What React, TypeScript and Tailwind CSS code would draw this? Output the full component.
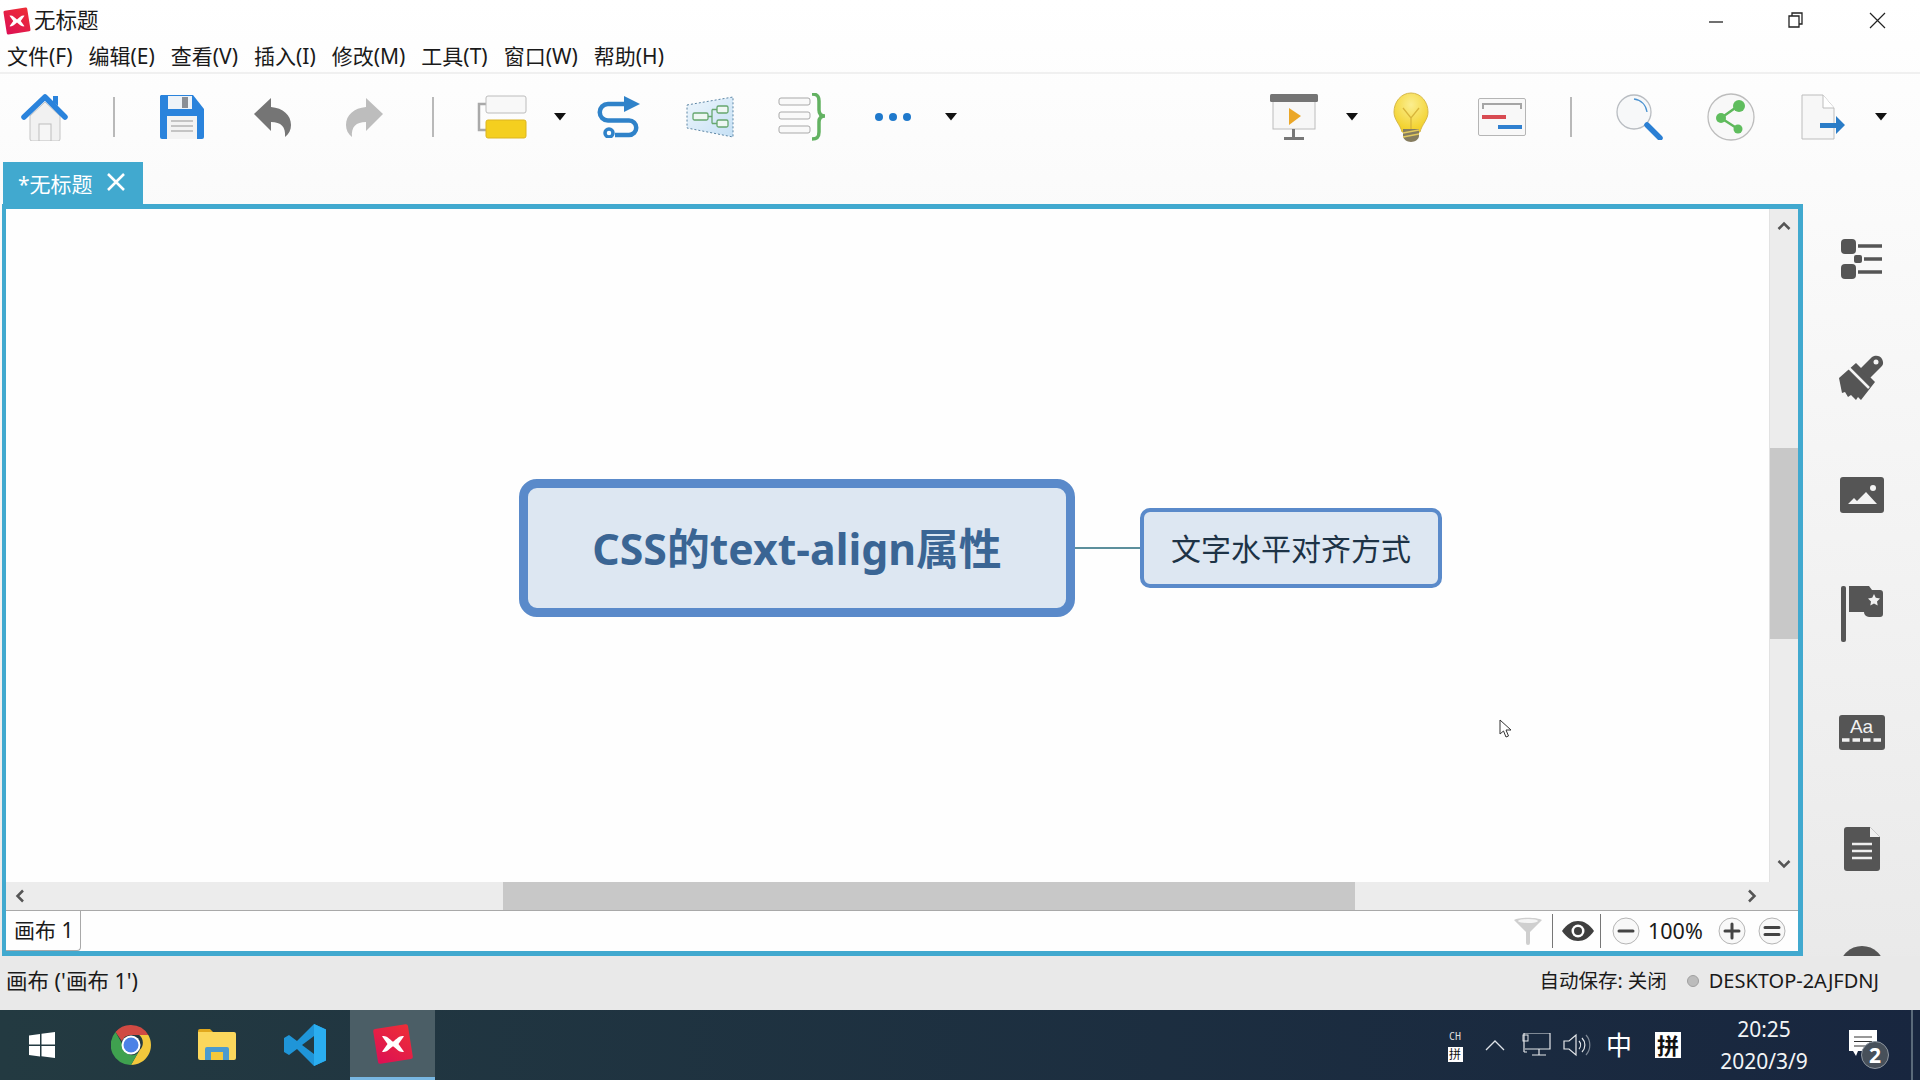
import type { ReactNode } from 'react';

const menus = ['文件(F)', '编辑(E)', '查看(V)', '插入(I)', '修改(M)', '工具(T)', '窗口(W)', '帮助(H)'];

function Caret({ className }: { className: string }) {
  return (
    <svg width="12" height="8" viewBox="0 0 12 8" className={className}>
      <path d="M0 0h12L6 7.5z" fill="#111" />
    </svg>
  );
}

function Sep({ className }: { className: string }) {
  return <div className={`w-[2px] h-[40px] bg-[#b9b9b9] ${className}`} />;
}

function XmindLogo({ size, className }: { size: number; className?: string }) {
  return (
    <svg width={size} height={size} viewBox="0 0 40 40" className={className}>
      <defs>
        <linearGradient id="xm" x1="1" y1="0" x2="0" y2="1">
          <stop offset="0" stopColor="#ee2f36" />
          <stop offset="1" stopColor="#dc0f55" />
        </linearGradient>
      </defs>
      <rect x="4" y="4" width="32" height="32" rx="2" fill="url(#xm)" transform="rotate(-9 20 20)" />
      <path d="M10 13c4-1 6 2 10 5 4-3 6-6 10-5l-5 7 5 7c-4 1-6-2-10-5-4 3-6 6-10 5l5-7z" fill="#fff" />
    </svg>
  );
}

function HomeIcon({ className }: { className: string }) {
  return (
    <svg width="48" height="48" viewBox="0 0 48 48" className={className}>
      <path d="M9 23 24 9l15 14v23a2 2 0 0 1-2 2H11a2 2 0 0 1-2-2z" fill="#f1f1f1" stroke="#c4c4c4" />
      <rect x="18" y="31" width="12" height="17" fill="#f6f6f6" stroke="#bdbdbd" />
      <path d="M3 24 24 4l20 20" fill="none" stroke="#2a83dc" strokeWidth="5.5" strokeLinecap="round" strokeLinejoin="round" />
      <path d="M32 3h5v10l-5-4z" fill="#2a83dc" />
    </svg>
  );
}

function SaveIcon({ className }: { className: string }) {
  return (
    <svg width="44" height="44" viewBox="0 0 44 44" className={className}>
      <path d="M1 0h32l11 14v28a2 2 0 0 1-2 2H2a2 2 0 0 1-2-2V1z" fill="#2a83dc" />
      <rect x="8" y="1" width="24" height="13" fill="#eef3f8" />
      <rect x="22" y="2" width="6" height="11" fill="#8a8f96" />
      <rect x="7" y="21" width="30" height="23" fill="#f3f3f3" />
      <path d="M11 26h22M11 31h22M11 36h22" stroke="#b5b5b5" strokeWidth="1.5" />
    </svg>
  );
}

function UndoIcon({ className, color, flip }: { className: string; color: string; flip?: boolean }) {
  return (
    <svg width="38" height="40" viewBox="0 0 38 40" className={className}>
      <g transform={flip ? 'matrix(-1 0 0 1 38 0)' : undefined}>
        <path d="M0 17 17 1v9c12 1 20 8 20 18 0 5-2 9-6 12 1-10-4-15-14-15v9z" fill={color} />
      </g>
    </svg>
  );
}

function TopicIcon({ className }: { className: string }) {
  return (
    <svg width="54" height="44" viewBox="0 0 54 44" className={className}>
      <path d="M11 9H3v26h8" fill="none" stroke="#a9a9a9" strokeWidth="2.5" />
      <rect x="10" y="1" width="40" height="17" rx="2" fill="#f8f8f8" stroke="#bcbcbc" />
      <rect x="10" y="25" width="40" height="18" rx="2" fill="#f4cf1f" stroke="#dcb520" />
    </svg>
  );
}

function RelationIcon({ className }: { className: string }) {
  return (
    <svg width="46" height="42" viewBox="0 0 46 42" className={className}>
      <path d="M30 8H13a8 8 0 0 0 0 16.500h21a7 7 0 0 1 0 14.500H20" fill="none" stroke="#2f82c9" strokeWidth="4.5" />
      <circle cx="14" cy="37" r="4" fill="#fff" stroke="#2f82c9" strokeWidth="3.500" />
      <path d="M29 0 45 8l-16 8z" fill="#2f82c9" />
    </svg>
  );
}

function BoundaryIcon({ className }: { className: string }) {
  return (
    <svg width="49" height="42" viewBox="0 0 49 42" className={className}>
      <defs>
        <linearGradient id="bd" x1="0" y1="0" x2="1" y2="1">
          <stop offset="0" stopColor="#eef6fc" />
          <stop offset="1" stopColor="#c5e0f5" />
        </linearGradient>
      </defs>
      <path d="M1 9 47 1v40L1 32z" fill="url(#bd)" stroke="#5d86a5" strokeDasharray="2 2" />
      <rect x="7" y="17" width="15" height="7" rx="1.500" fill="#eef7f3" stroke="#66a76e" strokeWidth="1.300" />
      <rect x="31" y="10" width="11" height="7" rx="1.500" fill="#eef7f3" stroke="#66a76e" strokeWidth="1.300" />
      <rect x="31" y="24" width="11" height="7" rx="1.500" fill="#eef7f3" stroke="#66a76e" strokeWidth="1.300" />
      <path d="M22 20.500h4M26 13.500v14M26 13.500h5M26 27.500h5" fill="none" stroke="#66a76e" strokeWidth="1.300" />
    </svg>
  );
}

function SummaryIcon({ className }: { className: string }) {
  return (
    <svg width="48" height="48" viewBox="0 0 48 48" className={className}>
      <rect x="1" y="5" width="31" height="7" rx="2" fill="#f9f9f9" stroke="#a9a9a9" />
      <rect x="1" y="19" width="31" height="7" rx="2" fill="#f9f9f9" stroke="#a9a9a9" />
      <rect x="1" y="33" width="31" height="7" rx="2" fill="#f9f9f9" stroke="#a9a9a9" />
      <path d="M34 1c5 0 7 2 7 7v9c0 4 2 6 6 6-4 0-6 2-6 6v10c0 5-2 7-7 7" fill="none" stroke="#63b262" strokeWidth="3.500" />
    </svg>
  );
}

function DotsIcon({ className }: { className: string }) {
  return (
    <svg width="38" height="10" viewBox="0 0 38 10" className={className}>
      <circle cx="5" cy="5" r="4" fill="#1f79cc" />
      <circle cx="19" cy="5" r="4" fill="#1f79cc" />
      <circle cx="33" cy="5" r="4" fill="#1f79cc" />
    </svg>
  );
}

function PresentIcon({ className }: { className: string }) {
  return (
    <svg width="48" height="46" viewBox="0 0 48 46" className={className}>
      <rect x="3" y="3" width="42" height="32" fill="#f7f7f7" stroke="#bcbcbc" />
      <rect x="0" y="0" width="48" height="8" rx="1.500" fill="#747474" />
      <path d="M19 14 31 22 19 31z" fill="#eba728" />
      <rect x="22" y="35" width="3" height="9" fill="#777" />
      <rect x="14" y="43" width="20" height="3" fill="#777" />
    </svg>
  );
}

function BulbIcon({ className }: { className: string }) {
  return (
    <svg width="36" height="50" viewBox="0 0 36 50" className={className}>
      <defs>
        <radialGradient id="bb" cx="0.5" cy="0.3" r="0.7">
          <stop offset="0" stopColor="#fbee8f" />
          <stop offset="1" stopColor="#f2cf24" />
        </radialGradient>
      </defs>
      <path d="M18 1C8 1 1 10 1 20c0 8 6 12 8 20h18c2-8 8-12 8-20C35 10 28 1 18 1z" fill="url(#bb)" stroke="#d6b84a" />
      <path d="M10 16l8 10 8-10M18 26v13" fill="none" stroke="#d8b53b" strokeWidth="1.300" />
      <path d="M10 37h16v7c0 3-4 6-8 6s-8-3-8-6z" fill="#857c5e" />
      <path d="M10 41l16-3M10 45l16-3" stroke="#e2c95f" strokeWidth="1.500" />
    </svg>
  );
}

function GanttIcon({ className }: { className: string }) {
  return (
    <svg width="48" height="38" viewBox="0 0 48 38" className={className}>
      <rect x="0.500" y="0.500" width="47" height="37" rx="1.500" fill="#f8f8f8" stroke="#b5b5b5" />
      <path d="M5 11V6h38v5" fill="none" stroke="#a5a5a5" strokeWidth="2" />
      <rect x="4" y="17" width="24" height="4" fill="#d84b52" />
      <rect x="20" y="27" width="24" height="4" fill="#2f80d0" />
    </svg>
  );
}

function SearchIcon({ className }: { className: string }) {
  return (
    <svg width="47" height="46" viewBox="0 0 47 46" className={className}>
      <circle cx="18" cy="18" r="17" fill="#f7f8f9" stroke="#b9bdc2" strokeWidth="1.300" />
      <path d="M18 5c7 1 12 6 13 13" fill="none" stroke="#4b92d0" strokeWidth="1.300" />
      <path d="M31 31l13 13" stroke="#2a7fd4" strokeWidth="5.500" strokeLinecap="round" />
    </svg>
  );
}

function ShareIcon({ className }: { className: string }) {
  return (
    <svg width="48" height="48" viewBox="0 0 48 48" className={className}>
      <circle cx="24" cy="24" r="23" fill="#f8f8f8" stroke="#bdbdbd" strokeWidth="1.300" />
      <path d="M14 25 31 13M14 25l17 11" stroke="#5fb85c" strokeWidth="2.500" />
      <circle cx="32" cy="13" r="6" fill="#5fbd5d" />
      <circle cx="14" cy="25" r="5" fill="#5fbd5d" />
      <circle cx="31" cy="36" r="4.500" fill="#5fbd5d" />
    </svg>
  );
}

function ExportIcon({ className }: { className: string }) {
  return (
    <svg width="45" height="46" viewBox="0 0 45 46" className={className}>
      <path d="M1 1h21l11 13v31H1z" fill="#f7f7f7" stroke="#bdbdbd" />
      <path d="M22 1v13h11" fill="#fff" stroke="#bdbdbd" />
      <path d="M19 29h16v-7l9 9-9 9v-6H19z" fill="#2a7cc7" />
    </svg>
  );
}

function PanelSlot({ children }: { children: ReactNode }) {
  return <div className="h-[60px] w-full shrink-0 flex items-center justify-center">{children}</div>;
}

function SideIcons() {
  const c = '#555555';
  return (
    <div className="flex-1 h-[752px] overflow-hidden pt-[26px] flex flex-col gap-[58px]">
      <PanelSlot>
        <svg width="42" height="42" viewBox="0 0 42 42">
          <rect x="0" y="0" width="15" height="15" rx="4" fill={c} />
          <rect x="0" y="25" width="15" height="15" rx="4" fill={c} />
          <rect x="13" y="16" width="8" height="8" rx="2" fill={c} />
          <path d="M17 7h24M23 20h18M17 33h24" stroke={c} strokeWidth="3.500" />
        </svg>
      </PanelSlot>
      <PanelSlot>
        <svg width="46" height="46" viewBox="0 0 46 46">
          <path d="M0 23 17 8l19 19-14 18-3-3-2 3-5-5-3 2-3-5-3 1z" fill={c} />
          <path d="M10 13 30 33" stroke="#f5f5f5" strokeWidth="2.500" />
          <path d="M21 14 33 2c3-2 8-2 10 2s1 6-1 8L30 24z" fill={c} />
          <circle cx="37" cy="7" r="2.500" fill="#f5f5f5" />
        </svg>
      </PanelSlot>
      <PanelSlot>
        <svg width="44" height="36" viewBox="0 0 44 36" className="-mt-[2px]">
          <rect x="0" y="0" width="44" height="36" rx="3" fill={c} />
          <circle cx="33" cy="11" r="3" fill="#f3f3f3" />
          <path d="M8 27l6-6 3 3 9-9 11 12z" fill="#f3f3f3" />
        </svg>
      </PanelSlot>
      <PanelSlot>
        <svg width="42" height="56" viewBox="0 0 42 56">
          <rect x="0" y="0" width="5" height="56" rx="2" fill={c} />
          <path d="M8 0h20l3 4h8a3 3 0 0 1 3 3v21a3 3 0 0 1-3 3H28a5 5 0 0 1-5-5H8z" fill={c} />
          <path d="m33 8 1.800 3.800 4.200.6-3 3 .7 4.100-3.700-2-3.700 2 .7-4.100-3-3 4.200-.6z" fill="#f1f1f1" />
        </svg>
      </PanelSlot>
      <PanelSlot>
        <div className="w-[46px] h-[35px] rounded-[3px] bg-[#555555] flex flex-col items-center pt-[1px]">
          <span className="font-['Liberation_Sans',sans-serif] text-[#f1f1f1] text-[19px] leading-[22px]">Aa</span>
          <svg width="40" height="4" viewBox="0 0 40 4">
            <path d="M0 2h40" stroke="#f1f1f1" strokeWidth="3.500" strokeDasharray="7.500 3" />
          </svg>
        </div>
      </PanelSlot>
      <PanelSlot>
        <svg width="36" height="44" viewBox="0 0 36 44" className="-mt-[2px]">
          <path d="M3 0h23l10 10v31a3 3 0 0 1-3 3H3a3 3 0 0 1-3-3V3a3 3 0 0 1 3-3z" fill={c} />
          <path d="M26 0l10 10H26z" fill="#f1f1f1" />
          <path d="M8 17h20M8 24h20M8 31h20" stroke="#eeeeee" strokeWidth="2.500" />
        </svg>
      </PanelSlot>
      <PanelSlot>
        <svg width="44" height="44" viewBox="0 0 44 44" className="-mt-[2px]">
          <ellipse cx="22" cy="22" rx="22" ry="21" fill={c} />
        </svg>
      </PanelSlot>
    </div>
  );
}

function ZoomButton({ kind }: { kind: 'minus' | 'plus' | 'fit' }) {
  return (
    <svg width="28" height="28" viewBox="0 0 28 28">
      <circle cx="14" cy="14" r="13" fill="#f8f8f8" stroke="#b5b5b5" />
      {kind === 'minus' && <path d="M7 14h14" stroke="#444" strokeWidth="3" strokeLinecap="round" />}
      {kind === 'plus' && <path d="M7 14h14M14 7v14" stroke="#444" strokeWidth="3" strokeLinecap="round" />}
      {kind === 'fit' && <path d="M7 10.500h14M7 17.500h14" stroke="#444" strokeWidth="3" strokeLinecap="round" />}
    </svg>
  );
}

function Canvas() {
  return (
    <div className="relative flex-1 bg-[#fefefe] overflow-hidden">
      <div className="absolute left-[513px] top-[270px] w-[556px] h-[138px] rounded-[18px] border-[9px] border-[#5a8aca] bg-[#dde7f2] flex items-center justify-center pt-[3px]">
        <span className="text-[42.8px] leading-none font-bold text-[#3a6594]">CSS的text-align属性</span>
      </div>
      <div className="absolute left-[1069px] top-[338px] w-[65px] h-[2px] bg-[#5c8f9c]" />
      <div className="absolute left-[1134px] top-[299px] w-[302px] h-[80px] rounded-[10px] border-4 border-[#5a8aca] bg-[#dde7f2] flex items-center justify-center pt-[2px]">
        <span className="text-[30px] leading-none text-[#1d3346]">文字水平对齐方式</span>
      </div>
      <svg width="14" height="20" viewBox="0 0 14 20" className="absolute left-[1493px] top-[510px]">
        <path d="M1 1v14l3.500-3 2.500 6 2.500-1-2.500-6h5z" fill="#fff" stroke="#333" />
      </svg>
    </div>
  );
}

function TaskbarIcons() {
  return (
    <div className="flex items-center h-full">
      <svg width="26" height="26" viewBox="0 0 26 26" className="ml-[29px]">
        <path d="M0 3.500 11 2v10.500H0zM12.500 1.800 26 0v12.500H12.500zM0 14h11v10.500L0 23zM12.500 14H26v12l-13.500-1.800z" fill="#fff" />
      </svg>
      <svg width="40" height="40" viewBox="0 0 40 40" className="ml-[56px]">
        <path d="M20 0a20 20 0 0 1 17.300 10H20a10 10 0 0 0-9.200 6L4.500 7A20 20 0 0 1 20 0z" fill="#d04a43" />
        <path d="M37.300 10A20 20 0 0 1 20 40l8.700-15a10 10 0 0 0-.5-15z" fill="#f2c83c" />
        <path d="M4.500 7 13 22a8 8 0 0 0 15.500 3L20 40A20 20 0 0 1 4.500 7z" fill="#3fa14f" />
        <circle cx="20" cy="20" r="9.500" fill="#fff" />
        <circle cx="20" cy="20" r="7.500" fill="#4c82e6" />
      </svg>
      <svg width="38" height="32" viewBox="0 0 38 32" className="ml-[47px]">
        <path d="M0 2a2 2 0 0 1 2-2h10l3 3h-15z" fill="#e1a81d" />
        <path d="M0 3h36a2 2 0 0 1 2 2v24a2 2 0 0 1-2 2H2a2 2 0 0 1-2-2z" fill="#fbd75c" />
        <path d="M7 31V20a2 2 0 0 1 2-2h20a2 2 0 0 1 2 2v11h-6v-8H13v8z" fill="#4b9bcf" />
        <rect x="13" y="23" width="12" height="8" fill="#f3c93d" />
      </svg>
      <svg width="42" height="42" viewBox="0 0 42 42" className="ml-[48px]">
        <path d="M30 0 42 5.500v31L30 42 13 25 5 31l-5-3V14l5-3 8 6z" fill="#1f95d8" />
        <path d="M30 12 18 21l12 9z" fill="#243a41" />
        <path d="M30 0l12 5.500v31L30 42z" fill="#2aaef0" />
      </svg>
      <div className="ml-[24px] w-[85px] h-full bg-[#4b5e66] border-b-[3px] border-[#78b7e2] flex items-center justify-center">
        <XmindLogo size={44} />
      </div>
    </div>
  );
}

function Tray() {
  return (
    <div className="ml-auto flex items-center h-full text-white">
      <div className="flex flex-col items-center w-[16px] mr-[22px] pt-[2px]">
        <span className="font-['DejaVu_Sans_Mono',monospace] text-[10px] leading-[12px] text-[#dddddd]">CH</span>
        <span className="mt-[4px] w-[15px] h-[15px] bg-white text-[#111] text-[12px] leading-[15px] text-center">拼</span>
      </div>
      <svg width="20" height="12" viewBox="0 0 20 12">
        <path d="M1 11 10 2l9 9" fill="none" stroke="#dfe3e8" strokeWidth="1.300" />
      </svg>
      <svg width="30" height="24" viewBox="0 0 30 24" className="ml-[17px]">
        <path d="M2 0h26v16H3M2 0v19M5 19h-3M10 22h14M17 16v6" fill="none" stroke="#e4e7ea" strokeWidth="1.200" />
        <rect x="1" y="2" width="5" height="6" fill="none" stroke="#e4e7ea" />
      </svg>
      <svg width="28" height="24" viewBox="0 0 28 24" className="ml-[11px]">
        <path d="M1 8h5l7-6v20l-7-6H1z" fill="none" stroke="#e4e7ea" strokeWidth="1.200" />
        <path d="M16 8a6 6 0 0 1 0 8M19 5a10 10 0 0 1 0 14" fill="none" stroke="#e4e7ea" strokeWidth="1.200" />
        <path d="M23 2a15 15 0 0 1 0 20" fill="none" stroke="#7d8794" strokeWidth="1.200" />
      </svg>
      <span className="ml-[15px] w-[26px] text-[26px] leading-none">中</span>
      <span className="ml-[23px] w-[26px] h-[26px] bg-white text-[#111] text-[22px] leading-[26px] font-bold text-center">拼</span>
      <div className="ml-[38px] w-[90px] flex flex-col items-center text-[21px] leading-[32px] text-[#f2f4f6]">
        <span>20:25</span>
        <span>2020/3/9</span>
      </div>
      <div className="relative ml-[40px] w-[30px] h-[30px]">
        <svg width="28" height="27" viewBox="0 0 28 27">
          <path d="M0 0h28v21H9l-2 5-3-5H0z" fill="#fff" />
          <path d="M5 7h18M5 11.500h18M5 16h12" stroke="#333" strokeWidth="1.200" />
        </svg>
        <span className="absolute left-[12px] top-[11px] w-[28px] h-[28px] rounded-full bg-[#47505a] border border-[#8d96a0] text-[21px] font-bold leading-[26px] text-center">2</span>
      </div>
      <div className="ml-[32px] mr-[7px] w-[2px] h-full bg-[#5a6a7a]" />
    </div>
  );
}

export default function App() {
  return (
    <div className="h-screen w-[1920px] overflow-hidden flex flex-col font-['Noto_Sans','Noto_Sans_CJK_SC',sans-serif] text-[#1a1a1a] bg-gradient-to-b from-[#ffffff] to-[#e7e7e7]">
      <div className="h-[41px] shrink-0 flex items-center">
        <XmindLogo size={30} className="ml-[2px]" />
        <span className="ml-[2px] text-[21.5px]">无标题</span>
        <svg width="186" height="18" viewBox="0 0 186 18" className="ml-auto mr-[25px]">
          <path d="M0 10h14" stroke="#222" strokeWidth="1.300" />
          <path d="M80 4h10v11H80zM83 4V1h10v11h-3" fill="none" stroke="#222" strokeWidth="1.300" />
          <path d="M161 1l15 15M176 1l-15 15" stroke="#222" strokeWidth="1.200" />
        </svg>
      </div>
      <div className="h-[33px] shrink-0 flex items-center gap-[16px] pl-[7px] border-b-2 border-[#f0f0f0] text-[21px] leading-none">
        {menus.map((m) => (
          <span key={m}>{m}</span>
        ))}
      </div>
      <div className="h-[88px] shrink-0 flex items-center pb-[2px]">
        <HomeIcon className="ml-[21px]" />
        <Sep className="ml-[44px]" />
        <SaveIcon className="ml-[45px]" />
        <UndoIcon className="ml-[50px]" color="#757575" />
        <UndoIcon className="ml-[53px]" color="#bdbdbd" flip />
        <Sep className="ml-[49px]" />
        <TopicIcon className="ml-[42px]" />
        <Caret className="ml-[24px]" />
        <RelationIcon className="ml-[29px]" />
        <BoundaryIcon className="ml-[45px]" />
        <SummaryIcon className="ml-[43px]" />
        <DotsIcon className="ml-[48px]" />
        <Caret className="ml-[33px]" />
        <PresentIcon className="ml-auto" />
        <Caret className="ml-[28px]" />
        <BulbIcon className="ml-[35px]" />
        <GanttIcon className="ml-[49px]" />
        <Sep className="ml-[44px]" />
        <SearchIcon className="ml-[44px]" />
        <ShareIcon className="ml-[44px]" />
        <ExportIcon className="ml-[46px]" />
        <Caret className="ml-[29px] mr-[33px]" />
      </div>
      <div className="h-[42px] shrink-0 pl-[3px]">
        <div className="w-[140px] h-full bg-[#41a9cf] text-white flex items-center pl-[15px] pt-[3px]">
          <span className="text-[21px] leading-none">*无标题</span>
          <svg width="20" height="20" viewBox="0 0 20 20" className="ml-[13px] mb-[6px]">
            <path d="M2 2l16 16M18 2 2 18" stroke="#fff" strokeWidth="2.500" />
          </svg>
        </div>
      </div>
      <div className="h-[752px] shrink-0 flex">
        <div className="ml-[2px] w-[1801px] h-full border-[5px] border-l-4 border-[#41a9cf] flex flex-col bg-white">
          <div className="h-[673px] flex">
            <Canvas />
            <div className="w-[29px] bg-[#ececec] border-l border-[#e2e2e2] flex flex-col items-center">
              <svg width="14" height="10" viewBox="0 0 14 10" className="mt-[12px] shrink-0">
                <path d="M1.500 8 7 2.500 12.500 8" fill="none" stroke="#555" strokeWidth="2.500" />
              </svg>
              <div className="mt-[217px] w-full h-[191px] bg-[#c8c8c8]" />
              <svg width="14" height="10" viewBox="0 0 14 10" className="mt-[220px] shrink-0">
                <path d="M1.500 2 7 7.500 12.500 2" fill="none" stroke="#555" strokeWidth="2.500" />
              </svg>
            </div>
          </div>
          <div className="h-[28px] bg-[#ececec] flex items-center">
            <svg width="10" height="14" viewBox="0 0 10 14" className="ml-[9px] shrink-0">
              <path d="M8 1.500 2.500 7 8 12.500" fill="none" stroke="#555" strokeWidth="2.500" />
            </svg>
            <div className="ml-[478px] w-[852px] h-full bg-[#c8c8c8]" />
            <svg width="10" height="14" viewBox="0 0 10 14" className="ml-[392px] shrink-0">
              <path d="M2 1.500 7.500 7 2 12.500" fill="none" stroke="#555" strokeWidth="2.500" />
            </svg>
          </div>
          <div className="flex-1 flex items-center border-t border-[#a9a9a9] bg-[#fefefe]">
            <div className="h-full w-[75px] -mt-[1px] bg-[#fefefe] border-r border-b border-[#a9a9a9] rounded-br-[4px] flex items-center pl-[8px] text-[21px] leading-none">
              画布 1
            </div>
            <svg width="30" height="28" viewBox="0 0 30 28" className="ml-[1432px]">
              <path d="M1 3c5-3 23-3 28 0L17 15v11a2 2 0 0 1-4 0V15z" fill="#cfcfcf" />
              <ellipse cx="15" cy="4" rx="10" ry="2" fill="#f4f4f4" />
            </svg>
            <div className="ml-[9px] w-px h-[34px] bg-[#777]" />
            <svg width="32" height="20" viewBox="0 0 32 20" className="ml-[9px]">
              <path d="M0 10C5 3 10 0 16 0s11 3 16 10c-5 7-10 10-16 10S5 17 0 10z" fill="#3f3f3f" />
              <circle cx="16" cy="10" r="6.500" fill="#fff" />
              <circle cx="16" cy="10" r="4" fill="#3f3f3f" />
            </svg>
            <div className="ml-[6px] w-px h-[34px] bg-[#777]" />
            <div className="ml-[11px] flex items-center">
              <ZoomButton kind="minus" />
              <span className="ml-[8px] w-[57px] text-[21.5px] leading-none">100%</span>
              <span className="ml-[13px]">
                <ZoomButton kind="plus" />
              </span>
              <span className="ml-[12px]">
                <ZoomButton kind="fit" />
              </span>
            </div>
          </div>
        </div>
        <SideIcons />
      </div>
      <div className="h-[54px] shrink-0 flex items-center leading-none pb-[4px] pl-[6px] bg-[#e9e9e9]">
        <span className="text-[21.5px]">画布 ('画布 1')</span>
        <span className="ml-auto text-[19.5px]">自动保存: 关闭</span>
        <span className="ml-[20px] w-[12px] h-[12px] rounded-full bg-[#bcbcbc] border border-[#a0a0a0]" />
        <span className="ml-[10px] mr-[41px] text-[20px]">DESKTOP-2AJFDNJ</span>
      </div>
      <div className="h-[70px] shrink-0 flex bg-gradient-to-r from-[#233a41] to-[#18263f]">
        <TaskbarIcons />
        <Tray />
      </div>
    </div>
  );
}
